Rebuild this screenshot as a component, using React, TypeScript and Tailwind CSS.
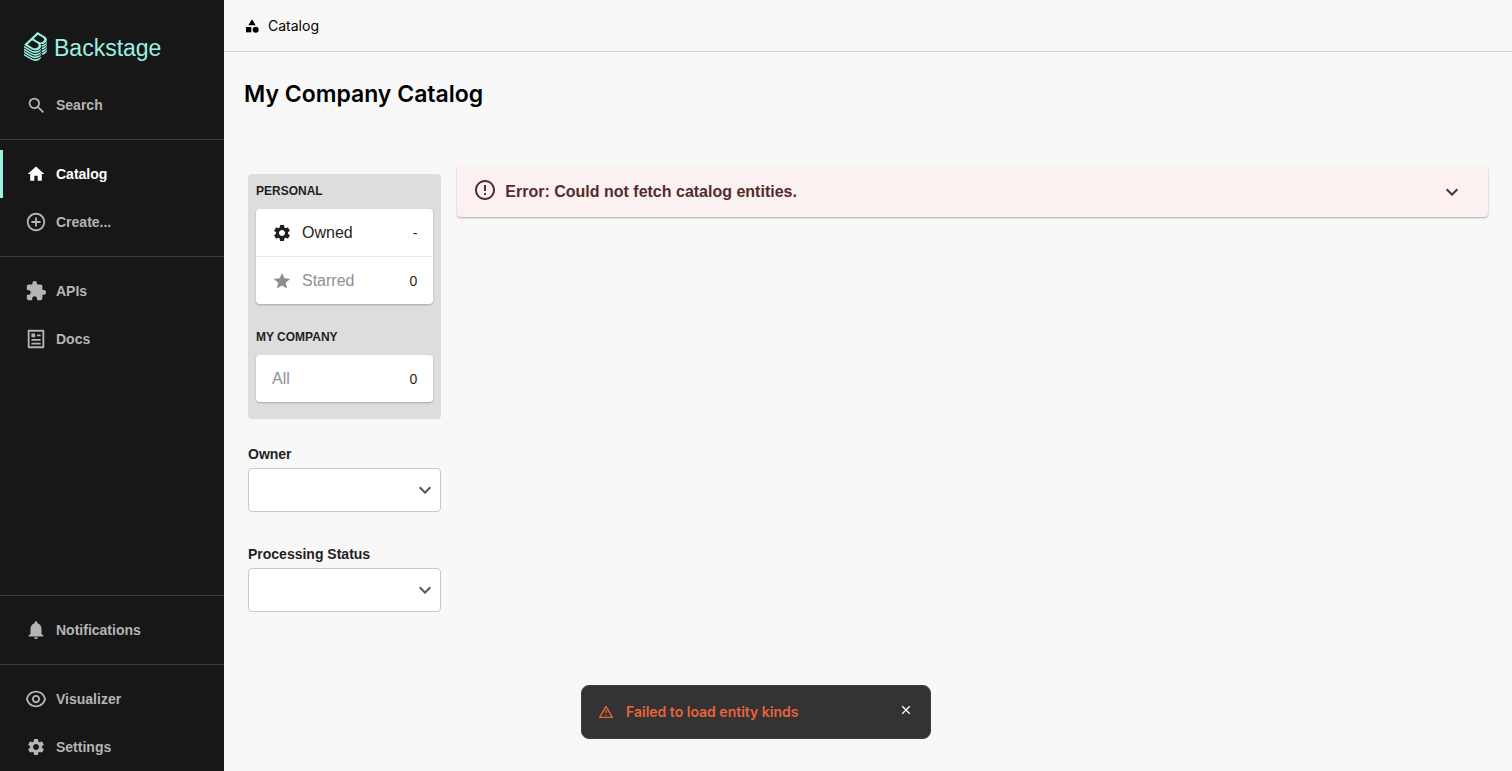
import type { ReactNode } from "react";
import {
  MdAddCircleOutline,
  MdCategory,
  MdErrorOutline,
  MdExpandMore,
  MdExtension,
  MdHome,
  MdNotifications,
  MdSearch,
  MdSettings,
  MdStar,
} from "react-icons/md";
import { RiAlertLine, RiArticleLine, RiCloseLine, RiEyeLine } from "react-icons/ri";

const LogoIcon = () => (
  <svg viewBox="0 0 338 429" className="h-[29px] w-[23px]" fill="#9bf0e1" aria-hidden="true">
    <path d="M303,166.05a80.69,80.69,0,0,0,13.45-10.37c.79-.77,1.55-1.53,2.3-2.3a83.12,83.12,0,0,0,7.93-9.38A63.69,63.69,0,0,0,333,133.23a48.58,48.58,0,0,0,4.35-16.4c1.49-19.39-10-38.67-35.62-54.22L198.56,0,78.3,115.23,0,190.25l108.6,65.91a111.59,111.59,0,0,0,57.76,16.41c24.92,0,48.8-8.8,66.42-25.69,19.16-18.36,25.52-42.12,13.7-61.87a49.22,49.22,0,0,0-6.8-8.87A89.17,89.17,0,0,0,259,178.29h.15a85.08,85.08,0,0,0,31-5.79A80.88,80.88,0,0,0,303,166.05ZM202.45,225.86c-19.32,18.51-50.4,21.23-75.7,5.9L51.61,186.15l67.45-64.64,76.41,46.38C223,184.58,221.49,207.61,202.45,225.86Zm8.93-82.22-70.65-42.89L205.14,39,274.51,81.1c25.94,15.72,29.31,37,10.55,55A60.69,60.69,0,0,1,211.38,143.64Z" />
    {[-78, -39, 0, 39].map((y) => (
      <path
        key={y}
        transform={`translate(0 ${y})`}
        d="M241.24,333.68c-19.57,18.75-46.17,29.09-74.88,29.09a123.73,123.73,0,0,1-64.1-18.2L0,282.52v24.67L108.6,373.1a111.6,111.6,0,0,0,57.76,16.42c24.92,0,48.8-8.81,66.42-25.69,12.88-12.34,20-27.13,19.68-41.49v-1.79A87.27,87.27,0,0,1,241.24,333.68Z"
      />
    ))}
    {[0, 39, 78, 117].map((y) => (
      <path
        key={y}
        transform={`translate(0 ${y})`}
        d="M337,140v26C324,194,300,216,262,219V194C296,192,324,172,337,140Z"
      />
    ))}
  </svg>
);

const SidebarItem = ({
  icon,
  label,
  active = false,
}: {
  icon: ReactNode;
  label: string;
  active?: boolean;
}) => (
  <li>
    <a
      href="#"
      className={`flex h-12 items-center border-l-[3px] text-sm font-bold ${
        active ? "border-[#9bf0e1] text-white" : "border-transparent text-[#b5b5b5]"
      }`}
    >
      <span className="ml-[21px] mr-2 flex w-6 justify-center">{icon}</span>
      {label}
    </a>
  </li>
);

const SidebarDivider = () => <hr className="my-[10px] border-[#383838]" />;

const Sidebar = () => (
  <nav className="flex w-56 shrink-0 flex-col bg-[#171717]">
    <a href="#" className="flex h-[81px] items-center gap-[7px] pl-6 pt-3 text-[23px] text-[#9bf0e1]">
      <LogoIcon />
      <span className="pt-1">Backstage</span>
    </a>
    <ul>
      <SidebarItem icon={<MdSearch size={21} />} label="Search" />
    </ul>
    <SidebarDivider />
    <ul>
      <SidebarItem icon={<MdHome size={20} />} label="Catalog" active />
      <SidebarItem icon={<MdAddCircleOutline size={22} />} label="Create..." />
    </ul>
    <SidebarDivider />
    <ul>
      <SidebarItem icon={<MdExtension size={22} />} label="APIs" />
      <SidebarItem icon={<RiArticleLine size={22} />} label="Docs" />
    </ul>
    <div className="mt-auto">
      <SidebarDivider />
      <ul>
        <SidebarItem icon={<MdNotifications size={22} />} label="Notifications" />
      </ul>
      <SidebarDivider />
      <ul>
        <SidebarItem icon={<RiEyeLine size={22} />} label="Visualizer" />
        <SidebarItem icon={<MdSettings size={20} />} label="Settings" />
      </ul>
    </div>
  </nav>
);

const FilterGroup = ({ title, children }: { title: string; children: ReactNode }) => (
  <section>
    <h2 className="py-[9px] text-xs leading-[17px] font-bold text-[#1f1f1f] uppercase">
      {title}
    </h2>
    <ul className="mb-4 divide-y divide-[#e8e8e8] rounded bg-white shadow-[0_1px_2px_rgba(0,0,0,0.25)]">
      {children}
    </ul>
  </section>
);

const FilterRow = ({
  icon,
  label,
  count,
  selected = false,
}: {
  icon?: ReactNode;
  label: string;
  count: string;
  selected?: boolean;
}) => (
  <li>
    <button
      type="button"
      className={`flex h-[47px] w-full items-center px-4 text-base ${
        selected ? "text-[#1f1f1f]" : "text-[#8f8f8f]"
      }`}
    >
      {icon && <span className="mr-[10px] flex w-5 justify-center">{icon}</span>}
      {label}
      <span className="ml-auto text-sm text-[#1f1f1f]">{count}</span>
    </button>
  </li>
);

const SelectFilter = ({ id, label }: { id: string; label: string }) => (
  <div>
    <label htmlFor={id} className="block text-sm leading-5 font-bold text-[#1f1f1f]">
      {label}
    </label>
    <div className="relative mt-1">
      <select
        id={id}
        className="block h-11 w-full appearance-none rounded border border-[#c8c8c8] bg-white px-3"
      />
      <MdExpandMore
        size={24}
        className="pointer-events-none absolute top-1/2 right-1 -translate-y-1/2 text-[#555]"
      />
    </div>
  </div>
);

const Toast = () => (
  <div
    role="alert"
    className="fixed bottom-8 left-1/2 flex h-[54px] w-[350px] -translate-x-1/2 items-center rounded-lg border border-[#3f3f3f] bg-[#333] px-4 font-[Inter,sans-serif] text-sm font-semibold text-[#e9633b]"
  >
    <RiAlertLine size={16} className="mr-3" />
    Failed to load entity kinds
    <button type="button" aria-label="Close" className="mb-1 ml-auto text-white">
      <RiCloseLine size={16} />
    </button>
  </div>
);

export default function App() {
  return (
    <div className="flex min-h-screen bg-[#f8f8f8] font-['Liberation_Sans',Arial,sans-serif]">
      <Sidebar />
      <main className="min-w-0 flex-1">
        <header className="font-[Inter,sans-serif] text-black">
          <div className="flex h-[52px] items-center gap-2 border-b border-[#d5d5d5] px-5 text-sm">
            <MdCategory size={16} />
            <a href="#">Catalog</a>
          </div>
          <h1 className="px-5 pt-6 text-[23px] leading-9 font-semibold">My Company Catalog</h1>
        </header>
        <div className="grid grid-cols-12 gap-4 px-6 pt-[54px]">
          <aside className="col-span-2 pt-2">
            <div className="rounded bg-[#ddd] px-2 pb-px">
              <FilterGroup title="Personal">
                <FilterRow icon={<MdSettings size={20} />} label="Owned" count="-" selected />
                <FilterRow icon={<MdStar size={20} />} label="Starred" count="0" />
              </FilterGroup>
              <FilterGroup title="My Company">
                <FilterRow label="All" count="0" />
              </FilterGroup>
            </div>
            <div className="mt-[25px] flex flex-col gap-8">
              <SelectFilter id="owner" label="Owner" />
              <SelectFilter id="processing-status" label="Processing Status" />
            </div>
          </aside>
          <section className="col-span-10">
            <button
              type="button"
              aria-expanded="false"
              className="flex h-[51px] w-full items-center rounded bg-[#faf1f0] pr-6 pl-4 text-base font-bold text-[#542c2c] shadow-[0_1px_2px_rgba(0,0,0,0.3)]"
            >
              <MdErrorOutline size={24} className="mr-2 mb-1" />
              Error: Could not fetch catalog entities.
              <MdExpandMore size={24} className="ml-auto" />
            </button>
          </section>
        </div>
      </main>
      <Toast />
    </div>
  );
}
